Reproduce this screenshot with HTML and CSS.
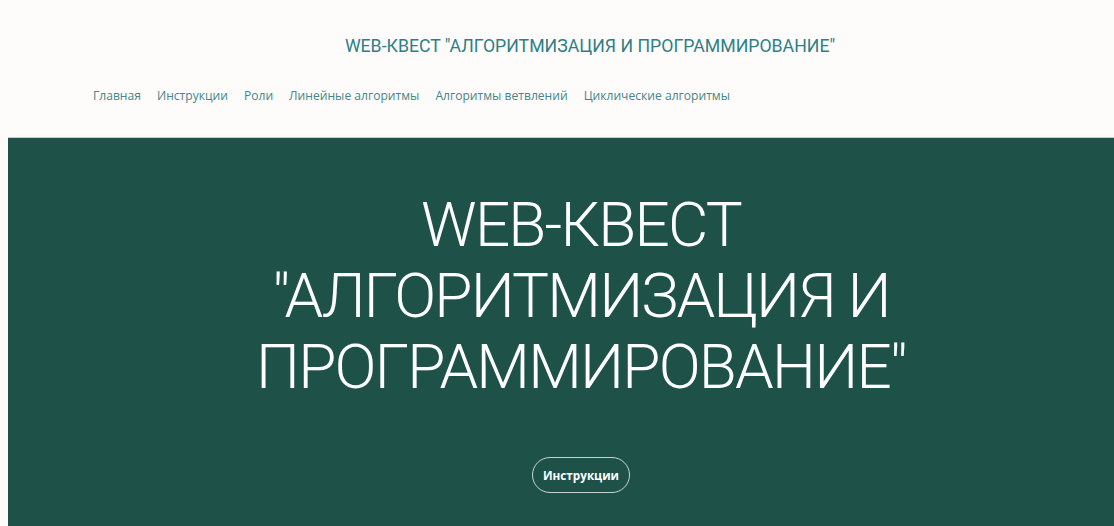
FILE: index.html
```html
<!DOCTYPE html>
<html lang="ru">
<head>
<meta charset="utf-8">
<title>WEB-КВЕСТ "АЛГОРИТМИЗАЦИЯ И ПРОГРАММИРОВАНИЕ"</title>
<link rel="stylesheet" href="styles.css">
</head>
<body>
  <header class="site-header">
    <div class="site-title">WEB-КВЕСТ "АЛГОРИТМИЗАЦИЯ И ПРОГРАММИРОВАНИЕ"</div>
    <nav class="site-nav">
      <a href="#">Главная</a>
      <a href="#">Инструкции</a>
      <a href="#">Роли</a>
      <a href="#">Линейные алгоритмы</a>
      <a href="#">Алгоритмы ветвлений</a>
      <a href="#">Циклические алгоритмы</a>
    </nav>
  </header>
  <section class="hero">
    <div class="hero-inner">
      <h1 class="hero-title">WEB-КВЕСТ<br>"АЛГОРИТМИЗАЦИЯ И<br>ПРОГРАММИРОВАНИЕ"</h1>
      <a class="hero-button" href="#">Инструкции</a>
    </div>
  </section>
</body>
</html>
```
FILE: styles.css
```css
html, body {
  margin: 0;
  padding: 0;
  background: #fdfcfa;
  overflow: hidden;
}

.site-header {
  height: 137px;
  display: flex;
  flex-direction: column;
}

.site-title {
  padding: 36px 0 0 66px;
  text-align: center;
  font-family: Roboto, "Liberation Sans", sans-serif;
  font-size: 17.7px;
  line-height: 20px;
  color: #2f7f85;
}

.site-nav {
  display: flex;
  gap: 16px;
  padding: 31px 0 0 93px;
  font-family: "Open Sans", "Liberation Sans", sans-serif;
  font-size: 12.1px;
  line-height: 18px;
}

.site-nav a {
  color: #468589;
  text-decoration: none;
}

.hero {
  margin-left: 8px;
  border-top: 1px solid #c9cdca;
  background: #1e5249;
  height: 400px;
}

.hero-inner {
  padding: 51px 0 0 40px;
  display: flex;
  flex-direction: column;
  align-items: center;
}

.hero-title {
  margin: 0;
  text-align: center;
  font-family: Roboto, "Liberation Sans", sans-serif;
  font-weight: 300;
  font-size: 62px;
  letter-spacing: -1.8px;
  line-height: 71px;
  color: #ffffff;
}

.hero-button {
  margin-top: 55px;
  width: 96px;
  height: 34px;
  border: 1px solid rgba(255, 255, 255, 0.75);
  border-radius: 18px;
  display: flex;
  align-items: center;
  justify-content: center;
  font-family: "Open Sans", "Liberation Sans", sans-serif;
  font-weight: 700;
  font-size: 11.7px;
  color: #ffffff;
  text-decoration: none;
}
```
